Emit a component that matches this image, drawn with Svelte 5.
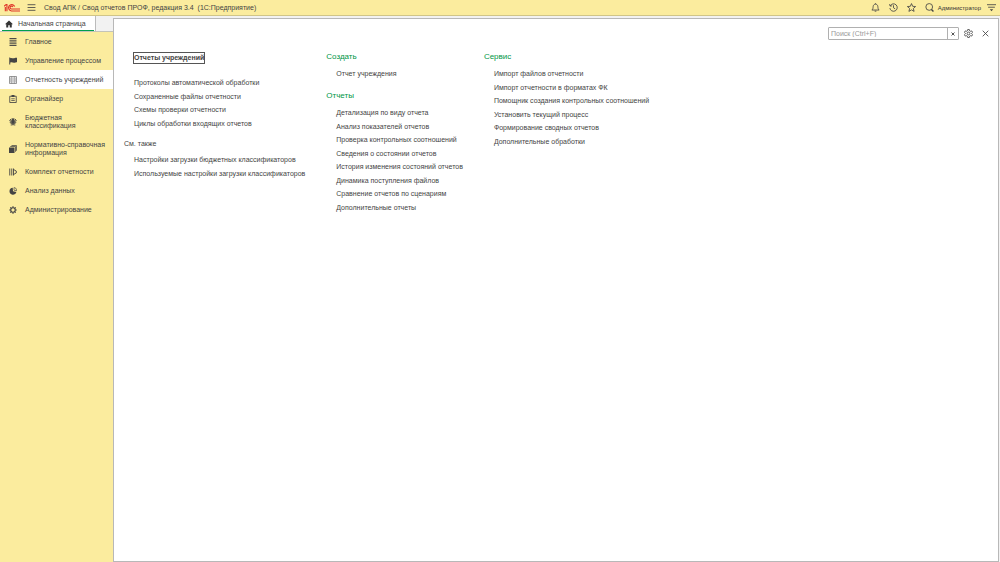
<script lang="ts">
  type Section = { id: string; title: string };
  type Group = { title: string; links: string[] };

  const sections: Section[] = [
    { id: 'main', title: 'Главное' },
    { id: 'process', title: 'Управление процессом' },
    { id: 'reports', title: 'Отчетность учреждений' },
    { id: 'organizer', title: 'Органайзер' },
    { id: 'budget', title: 'Бюджетная классификация' },
    { id: 'reference', title: 'Нормативно-справочная информация' },
    { id: 'set', title: 'Комплект отчетности' },
    { id: 'analysis', title: 'Анализ данных' },
    { id: 'admin', title: 'Администрирование' }
  ];

  const reportLinks = [
    'Протоколы автоматической обработки',
    'Сохраненные файлы отчетности',
    'Схемы проверки отчетности',
    'Циклы обработки входящих отчетов'
  ];

  const seeAlso = [
    'Настройки загрузки бюджетных классификаторов',
    'Используемые настройки загрузки классификаторов'
  ];

  const reportGroups: Group[] = [
    { title: 'Создать', links: ['Отчет учреждения'] },
    {
      title: 'Отчеты',
      links: [
        'Детализация по виду отчета',
        'Анализ показателей отчетов',
        'Проверка контрольных соотношений',
        'Сведения о состоянии отчетов',
        'История изменения состояний отчетов',
        'Динамика поступления файлов',
        'Сравнение отчетов по сценариям',
        'Дополнительные отчеты'
      ]
    }
  ];

  const serviceGroups: Group[] = [
    {
      title: 'Сервис',
      links: [
        'Импорт файлов отчетности',
        'Импорт отчетности в форматах ФК',
        'Помощник создания контрольных соотношений',
        'Установить текущий процесс',
        'Формирование сводных отчетов',
        'Дополнительные обработки'
      ]
    }
  ];

  let active = $state('reports');
  let query = $state('');
</script>

{#snippet linkList(links: string[])}
  <ul class="links">
    {#each links as link}
      <li><a href="#link">{link}</a></li>
    {/each}
  </ul>
{/snippet}

{#snippet groupList(groups: Group[])}
  {#each groups as group}
    <section class="group">
      <h2>{group.title}</h2>
      {@render linkList(group.links)}
    </section>
  {/each}
{/snippet}

{#snippet sectionIcon(id: string)}
  <svg class="section-icon" viewBox="0 0 16 16" aria-hidden="true">
    {#if id === 'main'}
      <path d="M1 1h14M1 4.500h14M1 8h14M1 11.500h14M1 15h14" stroke="currentColor" stroke-width="1.9" />
    {:else if id === 'process'}
      <path d="M1.500 1v14" stroke="currentColor" stroke-width="2" />
      <path d="M2 2.500c3-2 5 1 8 0s3-1 6-1v9c-3 0-3 1-6 1-3 0-5-2-8 0z" fill="currentColor" />
    {:else if id === 'reports'}
      <path d="M1 1h14v14H1zM5.500 1v14M10.500 1v14" fill="none" stroke="#777" stroke-width="1.5" />
      <path d="M3.300 3v10M8 3v10M12.700 3v10" stroke="#aaa" stroke-width="1.5" />
    {:else if id === 'organizer'}
      <path d="M1.500 2.500h13v12.500h-13z" fill="none" stroke="currentColor" stroke-width="1.7" />
      <path d="M5 0h6v4H5z" fill="currentColor" />
      <path d="M4.500 7.500h7M4.500 11h7" stroke="currentColor" stroke-width="1.5" />
    {:else if id === 'budget'}
      <path d="M6 3.500L4.500 2 6 .5h1.500L8 3 8.500.5H10L11.500 2 10 3.500l-.5 9L8 16l-1.500-3.500z" fill="currentColor" />
      <path
        d="M5 5.500L2.500 2M5.500 7L.8 5M5.500 8.500L1.500 8.500M6 10l-3 1.500M11 5.500L13.500 2M10.500 7l4.700-2M10.500 8.500h4M10 10l3 1.500M6.500 12l-2 3M9.500 12l2 3"
        stroke="currentColor"
        stroke-width="1.9"
      />
      <path d="M5 5h6v6H5z" fill="currentColor" />
    {:else if id === 'reference'}
      <path d="M0 5h11v11H0z" fill="currentColor" />
      <path d="M2.500 3h10.500v10.500M5 1h10v10.500" fill="none" stroke="currentColor" stroke-width="1.5" />
    {:else if id === 'set'}
      <path d="M1.500 1v14M5.500 1v14" stroke="currentColor" stroke-width="1.8" />
      <path d="M9 1v14M9 3l5.500 3v4L9 13" fill="none" stroke="currentColor" stroke-width="1.8" />
    {:else if id === 'analysis'}
      <path d="M7.500 1.500a7 7 0 1 0 7.300 8.500L8 8.500z" fill="currentColor" />
      <path d="M10 1v5.500l5.300 1A6 6 0 0 0 10 1z" fill="none" stroke="currentColor" stroke-width="1.300" />
    {:else}
      <circle cx="8" cy="8" r="4.500" fill="none" stroke="currentColor" stroke-width="2.200" />
      <path
        d="M8 .5v3M8 12.500v3M.5 8h3M12.500 8h3M2.700 2.700l2 2M11.300 11.300l2 2M2.700 13.300l2-2M11.300 4.700l2-2"
        stroke="currentColor"
        stroke-width="2.400"
      />
    {/if}
  </svg>
{/snippet}

<div class="app">
  <header class="topbar">
    <svg class="logo" viewBox="0 0 30 16" aria-label="1С">
      <g fill="none" stroke="#e0372b" stroke-width="2.2">
        <path d="M0 5.500L4 2.500h1.500V15M2.500 7v8" />
        <path d="M20 6A6 6 0 1 0 14 14.500h16" />
        <path d="M16.500 7a2.700 2.700 0 1 0-2.500 3.800h16" />
      </g>
    </svg>
    <button class="icon-button" aria-label="Меню">
      <svg class="menu-icon" viewBox="0 0 16 16">
        <path d="M1 3h14M1 8h14M1 13h14" />
      </svg>
    </button>
    <h1>Свод АПК / Свод отчетов ПРОФ, редакция 3.4&nbsp; (1С:Предприятие)</h1>
    <div class="tools">
      <button class="icon-button" aria-label="Уведомления">
        <svg viewBox="0 0 16 16">
          <path d="M1.500 12.500c2-1.500 2-3 2.300-6C4 3.500 6 2 8 2s4 1.500 4.200 4.500c.3 3 .3 4.500 2.300 6zM8 .5V2M6.500 14.500h3" />
        </svg>
      </button>
      <button class="icon-button" aria-label="История">
        <svg viewBox="0 0 16 16">
          <path d="M2.200 5A6.600 6.600 0 1 1 1.500 9M1 2l1 3.500L5.500 5M8 4v4.500l3 2" />
        </svg>
      </button>
      <button class="icon-button" aria-label="Избранное">
        <svg viewBox="0 0 16 16">
          <path d="M8 1l2.100 4.900 5.200.4-4 3.400 1.300 5.200L8 12.200l-4.600 2.700 1.300-5.200-4-3.400 5.200-.4z" />
        </svg>
      </button>
      <button class="icon-button" aria-label="Поиск">
        <svg viewBox="0 0 16 16">
          <circle cx="7.500" cy="7" r="6" />
          <path d="M11.500 11.500l3.500 3.500" stroke-width="2.500" />
        </svg>
      </button>
      <a class="user" href="#user">Администратор</a>
      <button class="icon-button" aria-label="Сервис и настройки">
        <svg viewBox="0 0 16 16">
          <path d="M0 3h16M2 7.500h12" />
          <path d="M5 11h6l-3 3.500z" fill="currentColor" stroke="none" />
        </svg>
      </button>
    </div>
  </header>

  <div class="body">
    <aside class="side">
      <div class="tabs">
        <a class="tab" href="#home">
          <svg viewBox="0 0 16 16" aria-hidden="true">
            <path d="M8 1L0 8.500h2.500V15h4v-4.500h3V15h4V8.500H16z" fill="#333" />
          </svg>
          <span>Начальная страница</span>
        </a>
      </div>
      <nav class="sections">
        {#each sections as section (section.id)}
          <button class="section" class:active={active === section.id} onclick={() => (active = section.id)}>
            {@render sectionIcon(section.id)}
            <span>{section.title}</span>
          </button>
        {/each}
      </nav>
    </aside>

    <main class="panel">
      <div class="panel-tools">
        <div class="search">
          <input type="text" placeholder="Поиск (Ctrl+F)" aria-label="Поиск" bind:value={query} />
          <button aria-label="Очистить" onclick={() => (query = '')}>
            <svg viewBox="0 0 8 8"><path d="M2.500 2.500l3 3M5.500 2.500l-3 3" /></svg>
          </button>
        </div>
        <button class="icon-button" aria-label="Настройка">
          <svg viewBox="0 0 16 16">
            <circle cx="8" cy="8" r="2.500" />
            <path
              d="M6.500 1h3l.5 2.200 1.500.9 2.200-.7 1.500 2.600L13.600 7.500v1l1.600 1.500-1.500 2.600-2.200-.7-1.500.9L9.500 15h-3L6 12.800l-1.500-.9-2.200.7L.8 10l1.600-1.500v-1L.8 6l1.500-2.600 2.200.7L6 3.200z"
            />
          </svg>
        </button>
        <button class="icon-button close" aria-label="Закрыть">
          <svg viewBox="0 0 16 16"><path d="M3 3l10 10M13 3L3 13" /></svg>
        </button>
      </div>

      <div class="columns">
        <div class="column">
          <a class="current" href="#reports">Отчеты учреждений</a>
          {@render linkList(reportLinks)}
          <h3>См. также</h3>
          {@render linkList(seeAlso)}
        </div>
        <div class="column">
          {@render groupList(reportGroups)}
        </div>
        <div class="column">
          {@render groupList(serviceGroups)}
        </div>
      </div>
    </main>
  </div>
</div>

<style>
  :global(body) {
    margin: 0;
  }

  .app {
    display: flex;
    flex-direction: column;
    min-height: 100vh;
    background: #f2f2f2;
    color: #444;
    font-family: 'Liberation Sans', Arial, sans-serif;
    font-size: 7px;
    line-height: 8px;
  }

  h1,
  h2,
  h3,
  ul {
    margin: 0;
    padding: 0;
    font-weight: normal;
  }

  a {
    color: inherit;
    text-decoration: none;
  }

  button {
    margin: 0;
    padding: 0;
    border: 0;
    background: none;
    color: inherit;
    font: inherit;
    cursor: pointer;
  }

  svg {
    display: block;
    flex: none;
  }

  .topbar {
    display: flex;
    align-items: center;
    box-sizing: border-box;
    height: 16px;
    padding: 0 4px;
    border-bottom: 1px solid #d0c588;
    background: #fbec9e;
  }

  .logo {
    width: 16px;
    height: 9px;
    margin-right: 7px;
  }

  .icon-button svg {
    width: 9px;
    height: 9px;
    fill: none;
    stroke: #444;
    stroke-width: 1.5;
  }

  h1 {
    margin-left: 8px;
    font-size: 7px;
    white-space: nowrap;
  }

  .tools {
    display: flex;
    align-items: center;
    gap: 9px;
    margin-left: auto;
  }

  .user {
    margin: 0 -3px 0 -5px;
    color: #333;
    font-size: 6px;
  }

  .body {
    display: flex;
    flex: 1;
  }

  .side {
    display: flex;
    flex-direction: column;
    flex: none;
    width: 113px;
  }

  .tabs {
    display: flex;
    height: 16px;
    border-bottom: 1px solid #c4c4b8;
    box-sizing: border-box;
  }

  .tab {
    display: flex;
    align-items: center;
    gap: 5px;
    width: 90px;
    padding-left: 5px;
    border-right: 1px solid #bbb;
    background: linear-gradient(#009e4d, #009e4d) 2px 14px / 92px 1px no-repeat #fff;
  }

  .tab svg {
    width: 8px;
    height: 8px;
  }

  .sections {
    flex: 1;
    background: #fbec9e;
  }

  .section {
    display: flex;
    align-items: center;
    gap: 8px;
    width: 100%;
    min-height: 19px;
    padding: 6px 0 5px 9px;
    text-align: left;
  }

  .section.active {
    background: #fff;
  }

  .section-icon {
    width: 8px;
    height: 8px;
  }

  .panel {
    flex: 1;
    margin: 2px 1px 0 0;
    border: 1px solid #b8b8b8;
    background: #fff;
  }

  .panel-tools {
    display: flex;
    align-items: center;
    justify-content: flex-end;
    gap: 5px;
    padding: 8px 8px 0;
  }

  .close {
    margin-left: 3px;
  }

  .search {
    display: flex;
    box-sizing: border-box;
    width: 131px;
    height: 13px;
    border: 1px solid #b0b0b0;
    border-radius: 1px;
  }

  .search input {
    flex: 1;
    min-width: 0;
    padding: 0 2px;
    border: 0;
    outline: 0;
    font: inherit;
  }

  .search input::placeholder {
    color: #999;
  }

  .search button {
    width: 11px;
    border-left: 1px solid #b0b0b0;
  }

  .search svg {
    width: 8px;
    height: 8px;
    margin: auto;
    stroke: #555;
  }

  .columns {
    display: flex;
    align-items: flex-start;
    gap: 21px;
    padding: 12px 10px;
  }

  .column {
    white-space: nowrap;
  }

  .current {
    display: block;
    width: max-content;
    margin: 0 0 12px 9px;
    border: 1px solid #555;
    font-weight: bold;
    line-height: 10px;
  }

  h2 {
    margin-bottom: 5px;
    color: #009646;
    font-size: 8px;
    line-height: 10px;
  }

  h3 {
    margin: 10px 0 5px;
    font-size: 7px;
    line-height: 8px;
  }

  .group + .group {
    margin-top: 10px;
  }

  .links {
    padding-left: 10px;
    list-style: none;
    line-height: 14px;
  }

  .links li:nth-child(even) {
    line-height: 13px;
  }
</style>
